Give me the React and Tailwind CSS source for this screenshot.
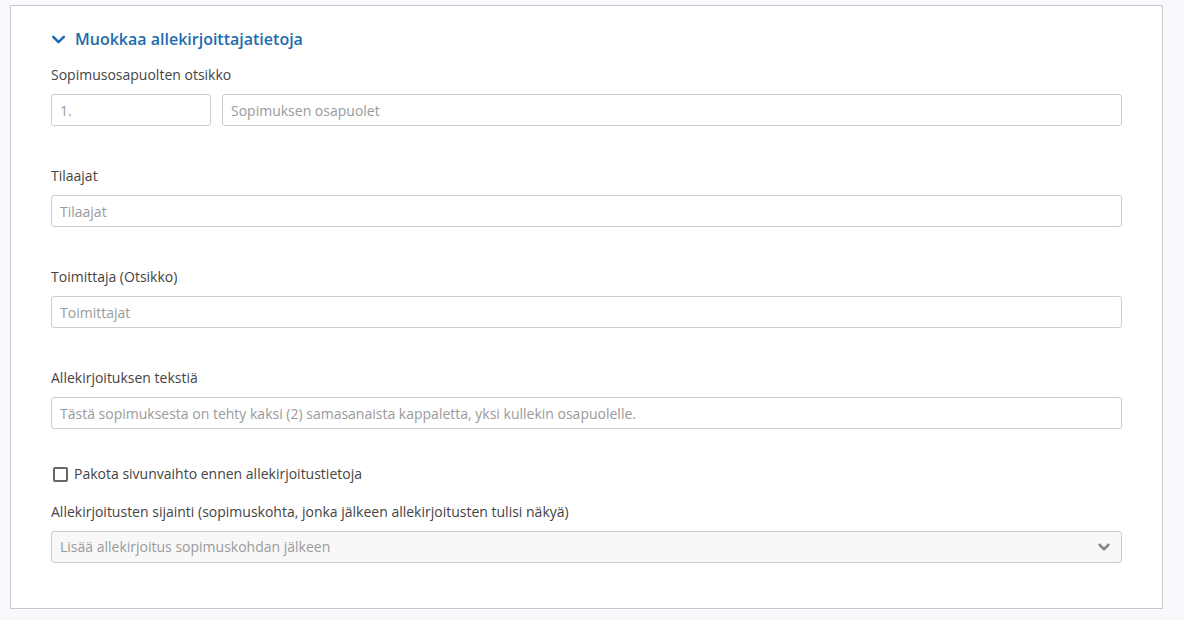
import { ChevronDown } from 'lucide-react'

const inputCls = 'h-8 w-full rounded-[3px] border border-[#cccccc] bg-white px-2 text-sm text-[#333] placeholder:text-[#9a9a9a] outline-none'

function Field({ label, placeholder }){
  return (
    <div className="mt-10">
      <label className="block text-sm leading-5 text-[#444]">{label}</label>
      <input placeholder={placeholder} className={`${inputCls} mt-[9px]`}/>
    </div>
  )
}

export default function App(){
  return (
    <div className="min-h-screen bg-[#f8f8fd] pl-[10px] pr-[21px] pt-[5px] pb-[11px]" style={{ fontFamily: '"Open Sans", sans-serif' }}>
      <div className="h-[604px] border border-[#c8c8cc] bg-white px-10 pt-[21px]">
        <div className="flex h-6 items-center text-[#1e6bb0]">
          <ChevronDown size={21} strokeWidth={3} className="-ml-[3px] mr-[6px]"/>
          <span className="text-base font-semibold">Muokkaa allekirjoittajatietoja</span>
        </div>

        <div className="mt-[14px]">
          <label className="block text-sm leading-5 text-[#444]">Sopimusosapuolten otsikko</label>
          <div className="mt-[9px] flex gap-[11px]">
            <input placeholder="1." className={`${inputCls} !w-[160px] shrink-0`}/>
            <input placeholder="Sopimuksen osapuolet" className={inputCls}/>
          </div>
        </div>

        <Field label="Tilaajat" placeholder="Tilaajat"/>
        <Field label="Toimittaja (Otsikko)" placeholder="Toimittajat"/>
        <Field label="Allekirjoituksen tekstiä" placeholder="Tästä sopimuksesta on tehty kaksi (2) samasanaista kappaletta, yksi kullekin osapuolelle."/>

        <label className="mt-[35px] flex h-5 items-center text-sm text-[#444]">
          <span className="ml-[2px] mr-[6px] h-[15px] w-[15px] rounded-[2px] border-2 border-[#666]"></span>
          Pakota sivunvaihto ennen allekirjoitustietoja
        </label>

        <div className="mt-[18px]">
          <label className="block text-sm leading-5 text-[#444]">Allekirjoitusten sijainti (sopimuskohta, jonka jälkeen allekirjoitusten tulisi näkyä)</label>
          <div className="mt-[9px] flex h-8 items-center justify-between rounded-[3px] border border-[#cccccc] bg-[#f8f8f8] pl-2 pr-[8px] text-sm text-[#9a9a9a]">
            <span>Lisää allekirjoitus sopimuskohdan jälkeen</span>
            <ChevronDown size={18} strokeWidth={3.4} className="text-[#888]"/>
          </div>
        </div>
      </div>
    </div>
  )
}
